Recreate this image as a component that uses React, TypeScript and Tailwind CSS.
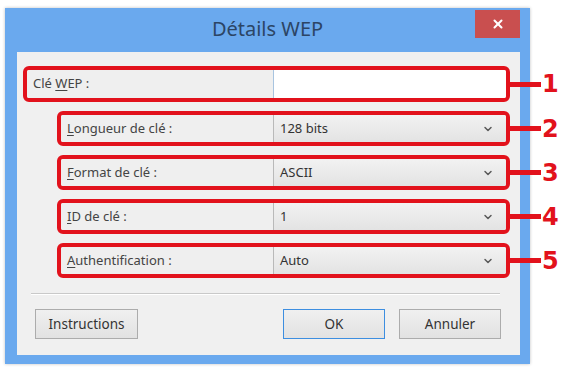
import React from 'react';
import { ChevronDown, X } from 'lucide-react';

type Row = {
  pre: string;
  key: string;
  post: string;
  value: string;
  kind: 'input' | 'select';
  num: string;
};

const rows: Row[] = [
  { pre: 'Clé ', key: 'W', post: 'EP :', value: '', kind: 'input', num: '1' },
  { pre: '', key: 'L', post: 'ongueur de clé :', value: '128 bits', kind: 'select', num: '2' },
  { pre: '', key: 'F', post: 'ormat de clé :', value: 'ASCII', kind: 'select', num: '3' },
  { pre: '', key: 'I', post: 'D de clé :', value: '1', kind: 'select', num: '4' },
  { pre: '', key: 'A', post: 'uthentification :', value: 'Auto', kind: 'select', num: '5' },
];

function FieldRow({ row }: { row: Row }): JSX.Element {
  const first = row.kind === 'input';
  return (
    <div className="flex items-center">
      <div
        className={
          first
            ? 'ml-[6px] flex h-[36px] w-[487px] shrink-0 items-stretch overflow-hidden rounded-[6px] border-[4px] border-[#e2121c]'
            : 'ml-[40px] flex h-[35px] w-[453px] shrink-0 items-stretch overflow-hidden rounded-[6px] border-[4px] border-[#e2121c]'
        }
      >
        <div className="flex flex-1 items-center bg-[#efefef] pl-[6px] text-[13px] text-[#444]">
          <span>
            {row.pre}
            <span className="underline underline-offset-2">{row.key}</span>
            {row.post}
          </span>
        </div>
        {first ? (
          <div className="w-[233px] border-l border-[#a8c4e0] bg-white" />
        ) : (
          <div className="flex w-[233px] items-center justify-between border-l border-[#b9b9b9] bg-gradient-to-b from-[#f2f2f2] to-[#e3e3e3] pl-[6px] pr-[12px] text-[13px] text-[#333]">
            <span>{row.value}</span>
            <ChevronDown size={12} strokeWidth={3} className="text-[#5a5a5a]" />
          </div>
        )}
      </div>
      <div className="h-[5px] w-[31px] shrink-0 bg-[#e2121c]" />
      <span className="ml-[1px] shrink-0 text-[24px] font-black leading-none text-[#e2121c] [font-family:'DejaVu_Sans',Arial,sans-serif]">
        {row.num}
      </span>
    </div>
  );
}

function Btn({ label, primary, width }: { label: string; primary?: boolean; width: string }): JSX.Element {
  return (
    <div
      className={
        (primary ? 'border-[#3d8ee0] ' : 'border-[#acacac] ') +
        width +
        ' flex h-[30px] items-center justify-center border bg-gradient-to-b from-[#f0f0f0] to-[#e2e2e2] text-[13.5px] text-[#333]'
      }
    >
      {label}
    </div>
  );
}

export default function App(): JSX.Element {
  return (
    <div className="h-[370px] w-[570px] bg-white pl-[5px] pt-[8px] [font-family:'Noto_Sans',Arial,sans-serif]">
      <div className="flex h-[356px] w-[525px] flex-col bg-[#6aa9ee] pb-[9px] pl-[12px] pr-[10px] shadow-[0_0_3px_rgba(0,0,0,0.25)]">
        {/* title bar */}
        <div className="-ml-[12px] -mr-[10px] flex h-[44px] shrink-0">
          <div className="w-[55px]" />
          <div className="flex flex-1 items-center justify-center pb-[2px] text-[20px] text-[#2c4565]">
            Détails WEP
          </div>
          <div className="mr-[10px] mt-[2px] flex h-[28px] w-[45px] items-center justify-center bg-[#c94f4f] text-white">
            <X size={14} strokeWidth={3.5} />
          </div>
        </div>

        {/* client area */}
        <div className="flex flex-1 flex-col bg-[#f0f0f0] pt-[14px]">
          <div className="flex flex-col gap-[9px]">
            {rows.map((r) => (
              <FieldRow key={r.num} row={r} />
            ))}
          </div>

          <div className="ml-[14px] mr-[20px] mt-[15px] border-t border-b border-t-[#c9c9c9] border-b-white" />

          <div className="mt-[14px] flex items-center pl-[18px] pr-[19px]">
            <Btn label="Instructions" width="w-[103px]" />
            <div className="flex-1" />
            <Btn label="OK" primary width="w-[102px]" />
            <div className="w-[14px]" />
            <Btn label="Annuler" width="w-[102px]" />
          </div>
        </div>
      </div>
    </div>
  );
}
